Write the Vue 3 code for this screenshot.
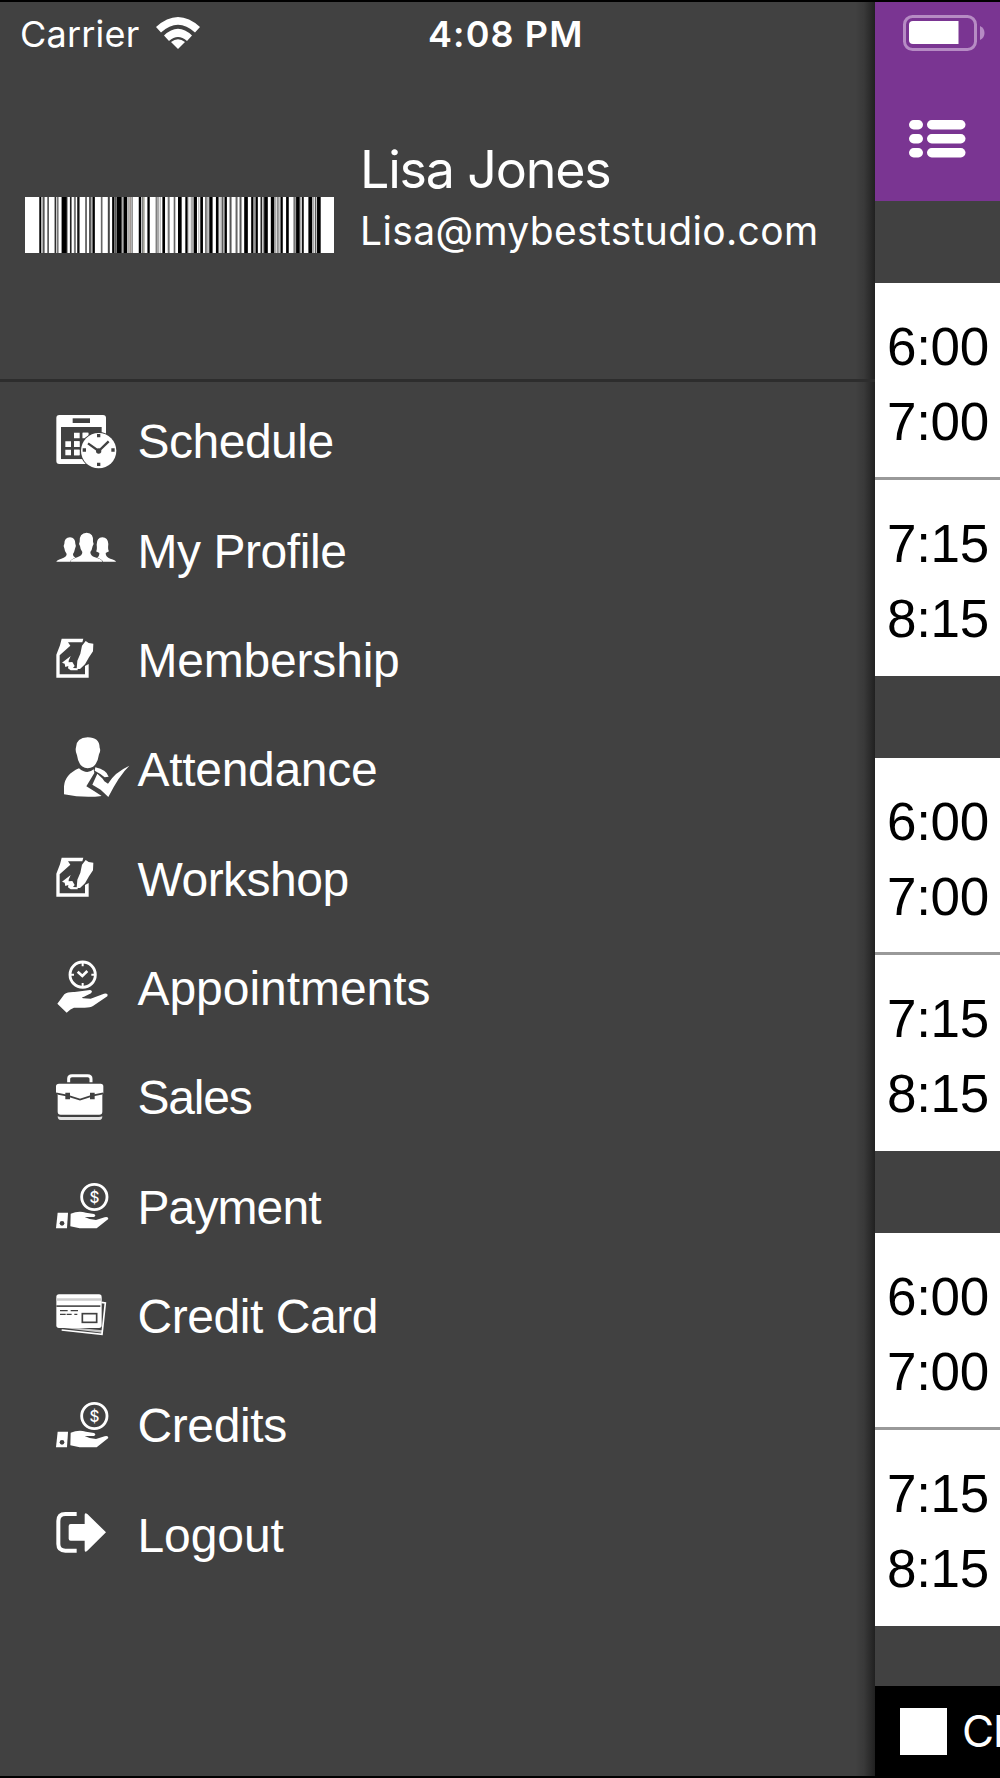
<script setup>
const menu = [
  { label: 'Schedule', icon: 'schedule', box: '36 32 252 240', spacing: -0.5 },
  { label: 'My Profile', icon: 'profile', box: '36 361 252 240', spacing: -0.45 },
  { label: 'Membership', icon: 'form', box: '36 -2 252 240', spacing: -0.2 },
  { label: 'Attendance', icon: 'attendance', box: '36 326 252 240', spacing: -0.3 },
  { label: 'Workshop', icon: 'form', box: '36 -2 252 240', spacing: -0.5 },
  { label: 'Appointments', icon: 'appointments', box: '36 22 252 240', spacing: -0.05 },
  { label: 'Sales', icon: 'sales', box: '36 350 252 240', spacing: -1.2 },
  { label: 'Payment', icon: 'payment', box: '36 17 252 240', spacing: -0.9 },
  { label: 'Credit Card', icon: 'card', box: '36 346 252 240', spacing: -0.45 },
  { label: 'Credits', icon: 'payment', box: '36 17 252 240', spacing: -0.4 },
  { label: 'Logout', icon: 'logout', box: '36 343 252 240', spacing: -0.1 }
]

const days = [1, 2, 3]
const slots = [
  { start: '6:00', end: '7:00' },
  { start: '7:15', end: '8:15' }
]

// [start, end, color]
const bars = [
  [88, 94, '#000'], [96, 98, '#888'], [99, 104, '#555'], [112, 117, '#555'], [134, 138, '#222'],
  [140, 146, '#777'], [155, 171, '#000'], [171, 174, '#999'], [180, 185, '#222'], [192, 198, '#777'],
  [202, 209, '#111'], [226, 231, '#555'], [238, 243, '#333'], [243, 248, '#aaa'], [248, 255, '#000'],
  [273, 278, '#666'], [294, 300, '#444'], [307, 314, '#000'], [315, 318, '#333'], [320, 336, '#000'],
  [336, 340, '#aaa'], [341, 352, '#000'], [353, 357, '#999'], [359, 363, '#857b74'], [365, 369, '#777'],
  [387, 394, '#000'], [396, 399, '#555'], [401, 404, '#665'], [413, 420, '#000'], [438, 441, '#333'],
  [441, 448, '#aaa'], [450, 453, '#aaa'], [458, 466, '#000'], [474, 480, '#777'], [492, 497, '#666'],
  [505, 516, '#000'], [527, 534, '#000'], [535, 539, '#ccc'], [543, 551, '#aaa'], [552, 562, '#000'],
  [566, 569, '#aaa'], [572, 580, '#000'], [587, 591, '#444'], [593, 597, '#999'], [599, 609, '#000'],
  [619, 627, '#000'], [630, 633, '#aaa'], [636, 640, '#444'], [640, 645, '#aaa'], [645, 652, '#000'],
  [660, 666, '#555'], [678, 684, '#666'], [690, 696, '#555'], [704, 715, '#000'], [725, 732, '#000'],
  [733, 737, '#999'], [738, 745, '#000'], [753, 758, '#222'], [760, 763, '#777'], [764, 775, '#000'],
  [784, 795, '#000'], [795, 801, '#aaa'], [804, 807, '#333'], [809, 811, '#aaa'], [813, 820, '#000'],
  [830, 838, '#000'], [852, 859, '#777'], [860, 871, '#000'], [873, 876, '#777'], [878, 883, '#000'],
  [897, 908, '#000'], [908, 915, '#aaa'], [917, 921, '#555'], [923, 934, '#000']
]
</script>

<template>
  <div class="screen">
    <aside class="drawer">
      <div class="status">
        <span class="carrier">Carrier</span>
        <svg class="wifi" viewBox="0 0 44 32">
          <path d="M0 10Q22 -10 44 10L39 15.500Q22 0 5 15.500Z" />
          <path d="M8 18.500Q22 5 36 18.500L31 24Q22 16 13 24Z" />
          <path d="M15 25Q22 19.500 29 25L22 32Z" />
        </svg>
        <span class="clock">4:08 PM</span>
      </div>

      <div class="user">
        <svg class="barcode" viewBox="45 0 929 171" preserveAspectRatio="none">
          <rect x="45" y="0" width="929" height="171" fill="#fff" />
          <rect v-for="b in bars" :key="b[0]" :x="b[0]" y="0" :width="b[1] - b[0]" height="171" :fill="b[2]" />
        </svg>
        <div class="who">
          <div class="name">Lisa Jones</div>
          <div class="email">Lisa@mybeststudio.com</div>
        </div>
      </div>

      <ul class="menu">
        <li v-for="item in menu" :key="item.label" class="item">
          <svg class="icon" :viewBox="item.box">
            <g v-if="item.icon === 'schedule'">
              <rect x="49" y="74" width="149" height="147" rx="9" />
              <rect class="cut" x="98" y="84" width="52" height="14" />
              <path class="cut" d="M63 110H186V130H198V221H128V207H63Z" />
              <path d="M63 207H140V221H63ZM185 110H198V135H185Z" />
              <path d="M102 127H119V144H102ZM128 127H145V144H128ZM76 153H93V170H76ZM102 153H119V170H102ZM76 178H93V195H76ZM102 178H119V195H102Z" />
              <circle class="cut" cx="176" cy="181" r="56" />
              <path d="M102 153H118V170H102ZM102 178H118V195H102ZM128 127H145V135L128 144Z" />
              <circle cx="176" cy="181" r="53" />
              <path class="cut-line" d="M144 159L176 182L206 153" stroke-width="7" />
              <circle class="cut" cx="176" cy="182" r="8" />
              <path class="cut" d="M171 131H181V141H171ZM171 217H181V227H171ZM128 174H138V184H128ZM214 174H224V184H214Z" />
            </g>
            <g v-else-if="item.icon === 'profile'">
              <path d="M49 516Q50 511 64 507Q80 502 80 493Q74 486 73 476Q69 468 73 462Q73 444 90 443Q106 444 106 462Q110 469 105 477Q103 487 99 493Q99 502 107 503Q93 510 90 516Z" />
              <path d="M228 516Q227 511 211 507Q197 503 197 490L207 485Q203 480 205 463Q204 444 187 443Q170 444 170 465Q172 480 168 485L178 490Q178 502 171 503Q186 510 189 516Z" />
              <path d="M91 516Q94 508 112 503Q127 498 127 487Q121 480 120 469Q115 462 119 456Q117 431 140 429Q162 431 159 456Q163 462 158 469Q156 481 151 487Q151 499 165 503Q185 508 187 516Z" />
            </g>
            <g v-else-if="item.icon === 'form'">
              <path d="M65 57H130L127 68H84L91 78L64 102L59 107V164H135V139L146 133V174H49V105L60 77Z" />
              <path d="M137 64L146 70L160 72L159 95L147 113L135 134L120 148L110 148L112 123L121 102L126 78Z" />
              <path d="M92 109L86 123L86 128L97 127L104 139L99 145L113 146L113 152L92 152L84 146L85 139L76 142L74 132L66 129Z" />
            </g>
            <g v-else-if="item.icon === 'attendance'">
              <path d="M143 351Q178 351 179 382Q183 391 177 402Q171 443 143 444Q116 442 111 405Q105 392 108 381Q109 352 143 351Z" />
              <path d="M117 444Q141 465 161 447L163 458L139 498L162 512L185 527Q132 534 72 522V498Q75 462 117 444Z" />
              <path d="M166 441Q200 449 206 469L194 471Q184 461 164 451Z" />
              <path d="M172 460L188 475L193 483L204 490Q224 456 268 436Q237 466 205 530L182 508L157 493Z" />
            </g>
            <g v-else-if="item.icon === 'appointments'">
              <circle class="line" cx="128" cy="105" r="38" stroke-width="8.500" />
              <path class="line" d="M113 96L127 109L142 94" stroke-width="8" />
              <path class="line" d="M128 70V80M128 130V140M93 105H102M154 105H163" stroke-width="6" />
              <path d="M52 192L73 164Q83 156 104 157L150 151Q160 153 153 161L132 171Q121 174 130 176L152 177L192 162Q206 160 202 170L159 199Q151 204 134 204L102 204Q92 207 80 219Z" />
            </g>
            <g v-else-if="item.icon === 'sales'">
              <path class="line" d="M86 426V415Q86 406 96 406H143Q153 406 153 415V426" stroke-width="9" />
              <path d="M57 430H182Q190 430 190 438V459L187 463V514Q187 523 178 523H62Q53 523 53 514V463L48 459V438Q48 430 57 430Z" />
              <path class="cut-line" d="M48 459L82 466L120 478L157 466L190 459" stroke-width="5" />
              <path class="cut" d="M76 457H90V477H76ZM150 457H164V477H150Z" />
              <path d="M53 528Q57 530 64 530H176Q183 530 187 528Q187 539 178 539H62Q53 539 53 528Z" opacity=".85" />
            </g>
            <g v-else-if="item.icon === 'payment'">
              <circle class="line" cx="163" cy="110" r="38" stroke-width="8.500" />
              <text class="dollar" x="163" y="127" text-anchor="middle">$</text>
              <path d="M53 157H84L81 204H48Z" />
              <circle class="cut" cx="66" cy="189" r="7" />
              <path d="M92 160Q116 150 138 157L162 161Q170 166 162 170H134Q150 179 168 179L194 171Q205 168 205 176L170 204H119L91 198Z" />
            </g>
            <g v-else-if="item.icon === 'card'">
              <path class="line" d="M184 425L196 427L186 521L65 508" stroke-width="5" />
              <path d="M54 500L186 516L187 509L78 498Z" opacity=".7" />
              <rect x="49" y="401" width="136" height="101" rx="8" />
              <path d="M49 413H185V420H49Z" fill="#ccc" />
              <path d="M49 434H181V439H49Z" fill="#555" />
              <path class="cut-line" d="M60 450H83M92 450H114M60 461H77M80 461H95M103 461H112" stroke-width="4" />
              <rect class="cut-line" x="127" y="459" width="43" height="26" stroke-width="5" />
            </g>
            <g v-else>
              <path class="line" d="M110 403H76Q55 403 55 424V493Q55 513 76 513H110" stroke-width="12" />
              <path d="M92 433H134V406Q134 397 142 403L198 458L142 513Q134 520 134 511V483H92Q86 483 86 477V439Q86 433 92 433Z" />
            </g>
          </svg>
          <span class="label" :style="{ letterSpacing: item.spacing + 'px' }">{{ item.label }}</span>
        </li>
      </ul>
    </aside>

    <main class="page">
      <header class="topbar">
        <svg class="battery" viewBox="0 0 82 36">
          <rect x="1.500" y="1.500" width="71" height="33" rx="8" fill="none" stroke="#b68bc4" stroke-width="3" />
          <path d="M10 6H55.500V29H10Q6 29 6 25V10Q6 6 10 6Z" fill="#fff" />
          <path d="M77 11Q81.500 13 81.500 18Q81.500 23 77 25Z" fill="#b68bc4" />
        </svg>
        <svg class="list" viewBox="0 0 58 38">
          <g v-for="y in [0, 14, 28]" :key="y">
            <rect x="0" :y="y" width="14" height="9.500" rx="4.700" />
            <rect x="18" :y="y" width="38.500" height="9.500" rx="4.700" />
          </g>
        </svg>
      </header>

      <section v-for="day in days" :key="day" class="day">
        <div v-for="slot in slots" :key="slot.start" class="slot">
          <div>{{ slot.start }}</div>
          <div>{{ slot.end }}</div>
        </div>
      </section>

      <footer class="bottom">
        <span class="check"></span>
        <span class="check-label">Cl</span>
      </footer>
    </main>
  </div>
</template>

<style>
body {
  background: #000;
}
</style>

<style scoped>
.screen {
  display: flex;
  box-sizing: border-box;
  width: 1000px;
  height: 1778px;
  padding-top: 2px;
  background: #000;
  overflow: hidden;
}

.drawer {
  flex: none;
  width: 875px;
  height: 1774px;
  color: #fff;
  background: linear-gradient(to right, transparent 855px, rgba(0, 0, 0, 0.12) 864px, rgba(0, 0, 0, 0.5) 875px), #414141;
}

.status {
  display: flex;
  align-items: center;
  height: 64px;
  padding-left: 20px;
  font: 36px/64px Inter, sans-serif;
}

.carrier {
  width: 136px;
  letter-spacing: 0.2px;
}

.wifi {
  width: 44px;
  height: 32px;
  margin-top: -2px;
  fill: #fff;
}

.clock {
  margin-left: 228px;
  font-weight: 600;
  letter-spacing: 1.1px;
  white-space: nowrap;
}

.user {
  display: flex;
  box-sizing: border-box;
  height: 316px;
  padding-left: 25px;
  border-bottom: 3px solid #2d2d2d;
}

.barcode {
  width: 309px;
  height: 56px;
  margin-top: 131px;
}

.who {
  padding: 73px 0 0 26px;
  font-family: Inter, sans-serif;
  white-space: nowrap;
}

.name {
  font-size: 52px;
  line-height: 62px;
  letter-spacing: -1.2px;
}

.email {
  font-size: 39px;
  line-height: 59px;
  letter-spacing: 0.35px;
}

.menu {
  margin: 0;
  padding: 4px 0 0 52px;
  list-style: none;
}

.item {
  display: flex;
  align-items: center;
  height: 109.36px;
  font: 48px/56px "Liberation Sans", Arial, sans-serif;
}

.label {
  padding: 3px 0 0 1.500px;
}

.icon {
  width: 84px;
  height: 80px;
  fill: #fff;
}

.cut {
  fill: #414141;
}

.cut-line {
  fill: none;
  stroke: #414141;
}

.line {
  fill: none;
  stroke: #fff;
}

.dollar {
  font: 500 46px Inter, sans-serif;
}

.page {
  display: flex;
  flex: none;
  flex-direction: column;
  width: 125px;
  background: #414141;
  overflow: hidden;
}

.topbar {
  height: 199px;
  padding-left: 28px;
  background: #7a3592;
}

.battery {
  display: block;
  width: 82px;
  height: 36px;
  padding-top: 13px;
}

.list {
  display: block;
  width: 58px;
  height: 38px;
  margin: 69px 0 0 6px;
  fill: #fff;
}

.day {
  height: 393.500px;
  margin-top: 81.500px;
  background: #fff;
}

.slot {
  box-sizing: border-box;
  height: 197px;
  padding: 26px 0 0 12px;
  color: #000;
  font: 53px/75px "Liberation Sans", Arial, sans-serif;
  letter-spacing: -0.3px;
}

.slot:first-child {
  border-bottom: 3px solid #999;
}

.bottom {
  display: flex;
  align-items: center;
  gap: 15px;
  height: 92px;
  margin-top: auto;
  padding-left: 25px;
  color: #fff;
  background: #000;
  font: 44px Inter, sans-serif;
  white-space: nowrap;
}

.check {
  flex: none;
  width: 47px;
  height: 47px;
  margin-top: -2px;
  background: #fff;
}

.check-label {
  margin-top: -3px;
  letter-spacing: -1px;
}
</style>
